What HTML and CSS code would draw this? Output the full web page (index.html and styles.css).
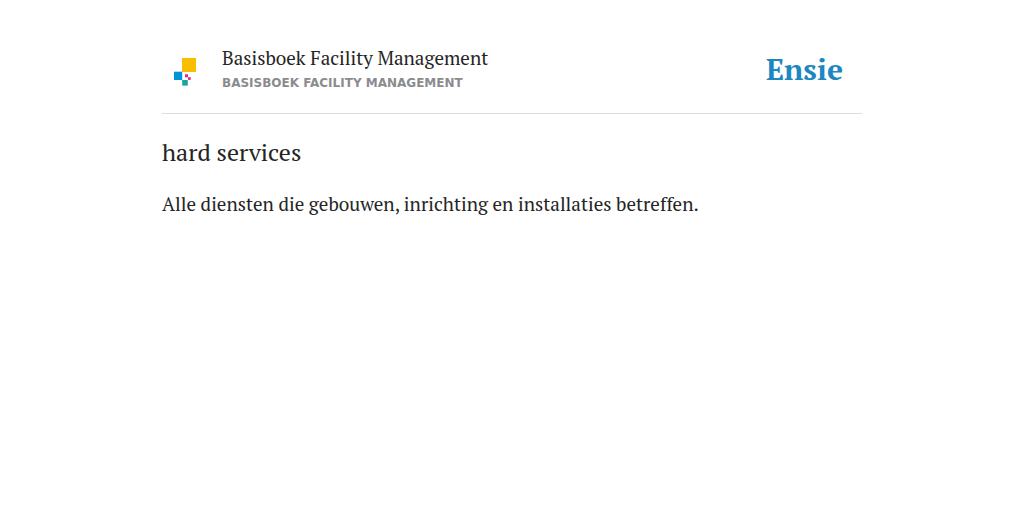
FILE: index.html
```html
<!DOCTYPE html>
<html lang="nl">
<head>
  <meta charset="UTF-8" />
  <meta name="viewport" content="width=device-width, initial-scale=1.0" />
  <title>hard services - Basisboek Facility Management</title>
  <link rel="stylesheet" href="styles.css">
</head>
<body>

  <div class="container">
    <header class="header">
      <svg class="source-logo" viewBox="0 0 48 48" aria-hidden="true">
        <rect x="20" y="10" width="14" height="14" fill="#fabe00" />
        <rect x="12" y="23.7" width="8.2" height="8.3" fill="#0095d5" />
        <rect x="20.2" y="32" width="5.6" height="5.6" fill="#13a89e" />
        <rect x="23" y="26.3" width="3" height="3" fill="#e5268c" />
        <rect x="26" y="29.2" width="2.7" height="2.7" fill="#e5268c" />
      </svg>
      <div class="source">
        <div class="source-title">Basisboek Facility Management</div>
        <div class="source-subtitle">Basisboek Facility Management</div>
      </div>
      <div class="brand">Ensie</div>
    </header>

    <main>
      <h1>hard services</h1>
      <p>Alle diensten die gebouwen, inrichting en installaties betreffen.</p>
    </main>
  </div>

</body>
</html>
```

FILE: styles.css
```css
body {
  margin: 0;
  background: #fff;
  color: #252525;
  font-family: 'PT Serif', 'Liberation Serif', serif;
}
.container {
  max-width: 700px;
  margin: 0 auto;
  padding-top: 44px;
}
.header {
  display: flex;
  align-items: flex-start;
  padding-bottom: 17px;
  border-bottom: 1px solid #dcdcdc;
}
.source-logo {
  width: 48px;
  height: 48px;
  margin: 4px 12px 0 0;
}
.source {
  flex: 1;
}
.source-title {
  font-size: 19px;
  line-height: 28px;
}
.source-subtitle {
  color: #8b8b8f;
  font-family: 'DejaVu Sans', sans-serif;
  font-size: 12px;
  font-weight: bold;
  line-height: 22px;
  text-transform: uppercase;
}
.brand {
  margin-right: 19px;
  color: #1c87c0;
  font-size: 30px;
  font-weight: bold;
  line-height: 50px;
}
h1 {
  margin: 22px 0 20px;
  font-size: 24px;
  font-weight: normal;
  line-height: 32px;
}
p {
  margin: 0;
  font-size: 19px;
  line-height: 32px;
}
```
